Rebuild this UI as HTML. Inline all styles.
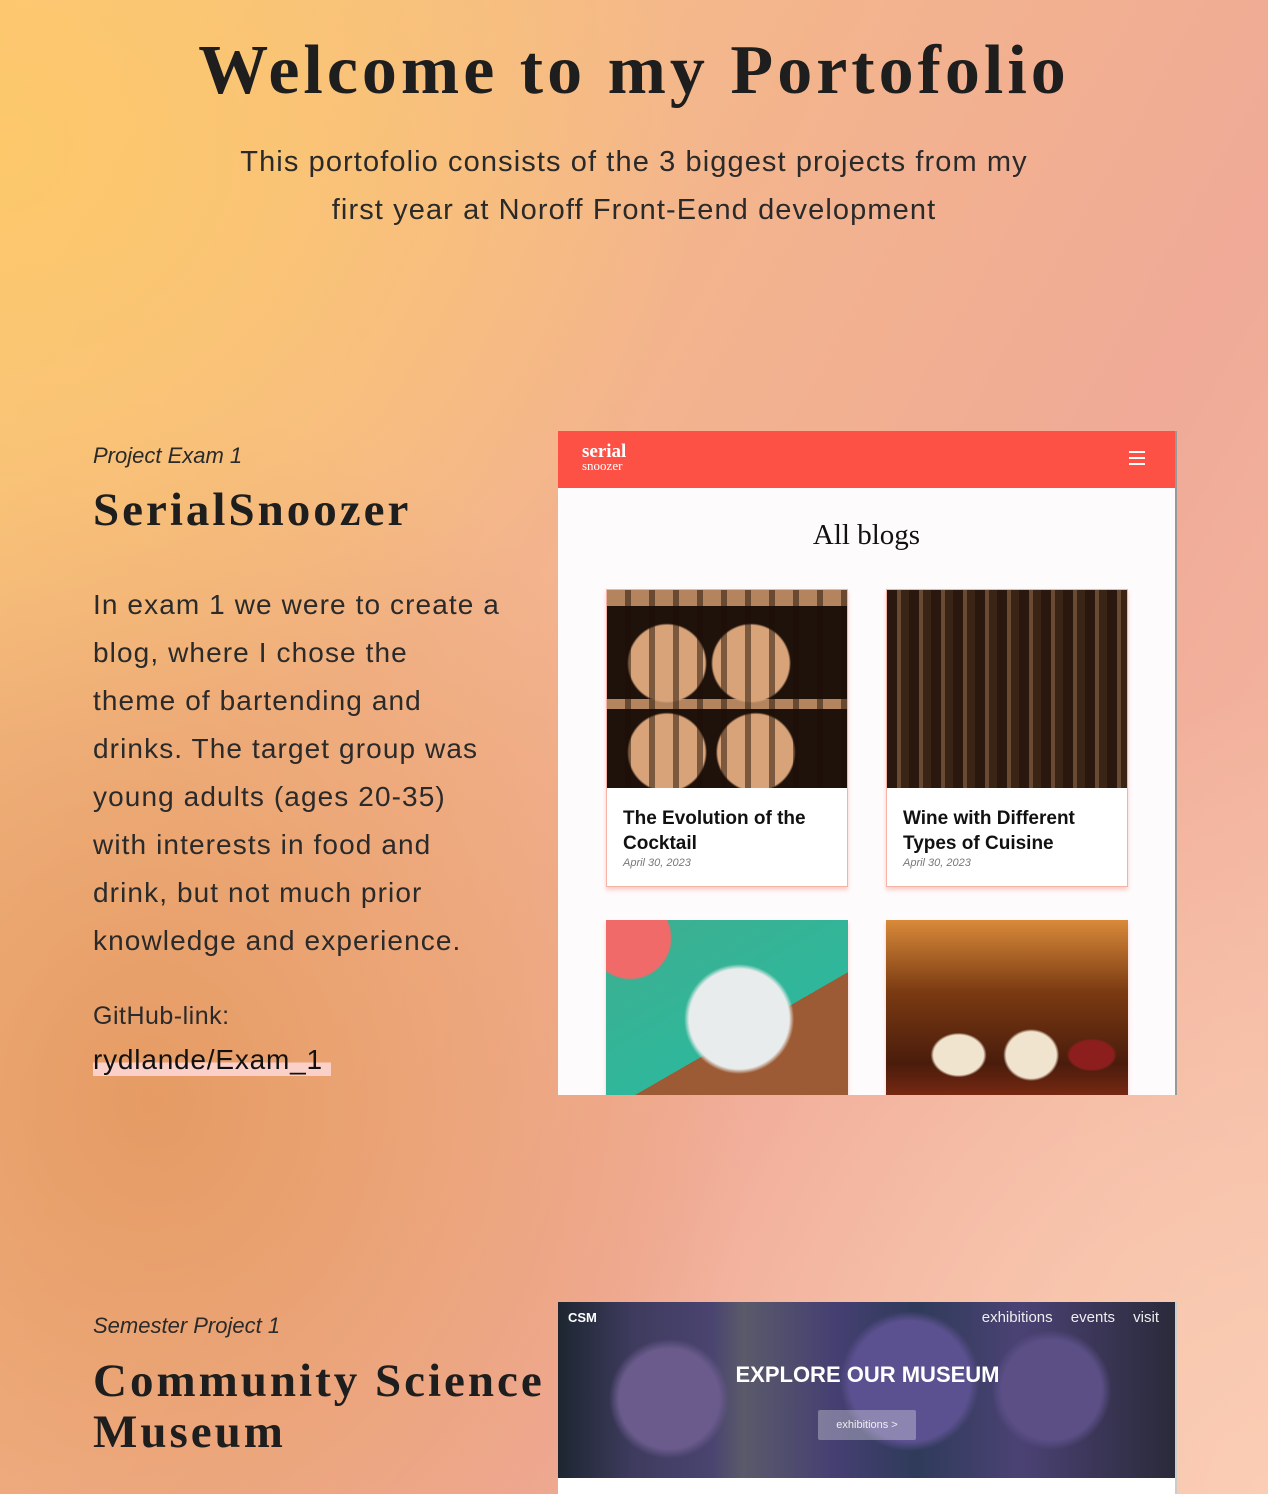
<!DOCTYPE html>
<html><head><meta charset="utf-8"><style>
*{margin:0;padding:0;box-sizing:border-box}
html,body{width:1268px;height:1494px;overflow:hidden}
body{position:relative;font-family:"Liberation Sans",sans-serif;color:#222;
background:
radial-gradient(ellipse 700px 600px at 0px 150px,rgba(253,200,105,.95),rgba(253,200,105,0) 100%),
radial-gradient(ellipse 600px 700px at 150px 1100px,rgba(228,152,95,.9),rgba(228,152,95,0) 100%),
radial-gradient(ellipse 700px 800px at 1268px 1494px,rgba(250,205,180,1),rgba(250,205,180,0) 100%),
linear-gradient(120deg,#f8c67f 0%,#f3b48d 40%,#f0aa97 65%,#f6bda5 100%);}
.abs{position:absolute}
h1{position:absolute;top:31px;left:0;width:1268px;text-align:center;font-family:"Liberation Serif",serif;font-weight:bold;font-size:70px;letter-spacing:4px;color:#1e1e1e}
.sub{top:138px;left:0;width:1268px;text-align:center;font-size:29px;line-height:48px;color:#2a2a2a;letter-spacing:1.1px}
.tag{font-style:italic;font-size:22px;color:#2a2a2a}
.h2{font-family:"Liberation Serif",serif;font-weight:bold;font-size:47px;line-height:51px;color:#1e1e1e;letter-spacing:3px;white-space:nowrap}
.p{font-size:28px;line-height:48px;color:#2a2a2a;white-space:nowrap;letter-spacing:1.1px}
.shot{left:558px;top:431px;width:619px;height:664px;background:#fefbfc;overflow:hidden;border-right:2px solid #999}
.hdr{height:57px;background:#fe5146;position:relative}
.card{position:absolute;width:242px;height:298px;background:#fff;border:1px solid #f5b2a5;box-shadow:0 3px 4px rgba(240,140,120,.4)}
.img{height:198px}
.ct{position:absolute;left:16px;top:216px;font-weight:bold;font-size:19px;line-height:25px;color:#111}
.cd{position:absolute;left:16px;top:267px;font-style:italic;font-size:11px;color:#777}
</style></head><body>
<h1>Welcome to my Portofolio</h1>
<div class="abs sub">This portofolio consists of the 3 biggest projects from my<br>first year at Noroff Front-Eend development</div>

<div class="abs tag" style="left:93px;top:443px">Project Exam 1</div>
<div class="abs h2" style="left:93px;top:485px">SerialSnoozer</div>
<div class="abs p" style="left:93px;top:581px">In exam 1 we were to create a<br>blog, where I chose the<br>theme of bartending and<br>drinks. The target group was<br>young adults (ages 20-35)<br>with interests in food and<br>drink, but not much prior<br>knowledge and experience.</div>
<div class="abs" style="left:93px;top:1002px;font-size:25px;color:#2a2a2a;letter-spacing:.5px">GitHub-link:</div>
<div class="abs" style="left:93px;top:1044px;font-size:28px;color:#111;letter-spacing:.8px;background:linear-gradient(transparent 58%,#fbd0c8 58%);padding-right:8px">rydlande/Exam_1</div>

<div class="abs shot">
 <div class="hdr">
  <div class="abs" style="left:24px;top:14px;color:#fff;font-family:'Liberation Serif',serif;font-weight:bold;font-size:19px;line-height:13px">serial<br><span style="font-size:13px;font-weight:normal">snoozer</span></div>
  <div class="abs" style="right:30px;top:20px;width:16px;height:14px;border-top:2px solid #fff;border-bottom:2px solid #fff"><div style="margin-top:4px;height:2px;background:#fff"></div></div>
 </div>
 <div class="abs" style="left:0;width:617px;top:88px;text-align:center;font-family:'Liberation Serif',serif;font-size:29px;color:#111">All blogs</div>
 <div class="card" style="left:48px;top:158px"><div class="img" style="background:repeating-linear-gradient(90deg,transparent 0 18px,rgba(30,15,5,.5) 18px 24px),radial-gradient(circle at 25% 37%,#d9a379 0 38px,transparent 40px),radial-gradient(circle at 60% 37%,#d9a379 0 38px,transparent 40px),radial-gradient(circle at 25% 82%,#d9a379 0 38px,transparent 40px),radial-gradient(circle at 62% 82%,#d9a379 0 38px,transparent 40px),linear-gradient(#b3845e 0 8%,#1e120b 8% 55%,#b3845e 55% 60%,#1e120b 60%)"></div><div class="ct">The Evolution of the<br>Cocktail</div><div class="cd">April 30, 2023</div></div>
 <div class="card" style="left:328px;top:158px"><div class="img" style="background:repeating-linear-gradient(90deg,#2a170d 0 10px,#6b4a33 10px 14px,#3a2416 14px 22px),linear-gradient(#5a3c28,#2a170d)"></div><div class="ct">Wine with Different<br>Types of Cuisine</div><div class="cd">April 30, 2023</div></div>
 <div class="card" style="left:48px;top:489px;border:none"><div class="img" style="height:180px;background:radial-gradient(circle at 55% 55%,#e8ecec 0 50px,transparent 55px),radial-gradient(circle at 10% 10%,#f06a6a 0 40px,transparent 42px),linear-gradient(150deg,#3fae8f,#2fb79b 60%,#9c5b34 60%)"></div></div>
 <div class="card" style="left:328px;top:489px;border:none"><div class="img" style="height:180px;background:radial-gradient(ellipse at 30% 75%,#f1e4cf 0 25px,transparent 28px),radial-gradient(ellipse at 60% 75%,#f1e4cf 0 25px,transparent 28px),radial-gradient(ellipse at 85% 75%,#8c1e1e 0 22px,transparent 25px),linear-gradient(#d98a3a,#7a3a12 40%,#4a1c0c 80%,#7d2a12)"></div></div>
</div>

<div class="abs tag" style="left:93px;top:1313px">Semester Project 1</div>
<div class="abs h2" style="left:93px;top:1356px">Community Science<br>Museum</div>
<div class="abs" style="left:558px;top:1302px;width:619px;height:192px;background:#fff;border-right:2px solid #ccc">
 <div style="height:176px;position:relative;background:radial-gradient(circle at 18% 55%,#6a5b8c 0 50px,transparent 60px),radial-gradient(circle at 57% 45%,#5c5190 0 60px,transparent 70px),radial-gradient(circle at 80% 50%,#5b4f86 0 50px,transparent 60px),linear-gradient(90deg,#1d2630 0%,#3e3b5e 12%,#4a4470 25%,#5a5a6a 30%,#453f72 45%,#2f3b5a 58%,#4b4274 75%,#2a2a3a 100%)">
  <div class="abs" style="left:10px;top:8px;color:#fff;font-weight:bold;font-size:13px">CSM</div>
  <div class="abs" style="right:16px;top:7px;color:#eee;font-size:15px;word-spacing:14px">exhibitions events visit</div>
  <div class="abs" style="left:0;width:619px;top:60px;text-align:center;color:#fff;font-weight:bold;font-size:22px">EXPLORE OUR MUSEUM</div>
  <div class="abs" style="left:260px;top:108px;width:98px;height:30px;background:rgba(255,255,255,.3);border-radius:2px;color:#eee;font-size:11px;text-align:center;line-height:30px">exhibitions &gt;</div>
 </div>
</div>
</body></html>
